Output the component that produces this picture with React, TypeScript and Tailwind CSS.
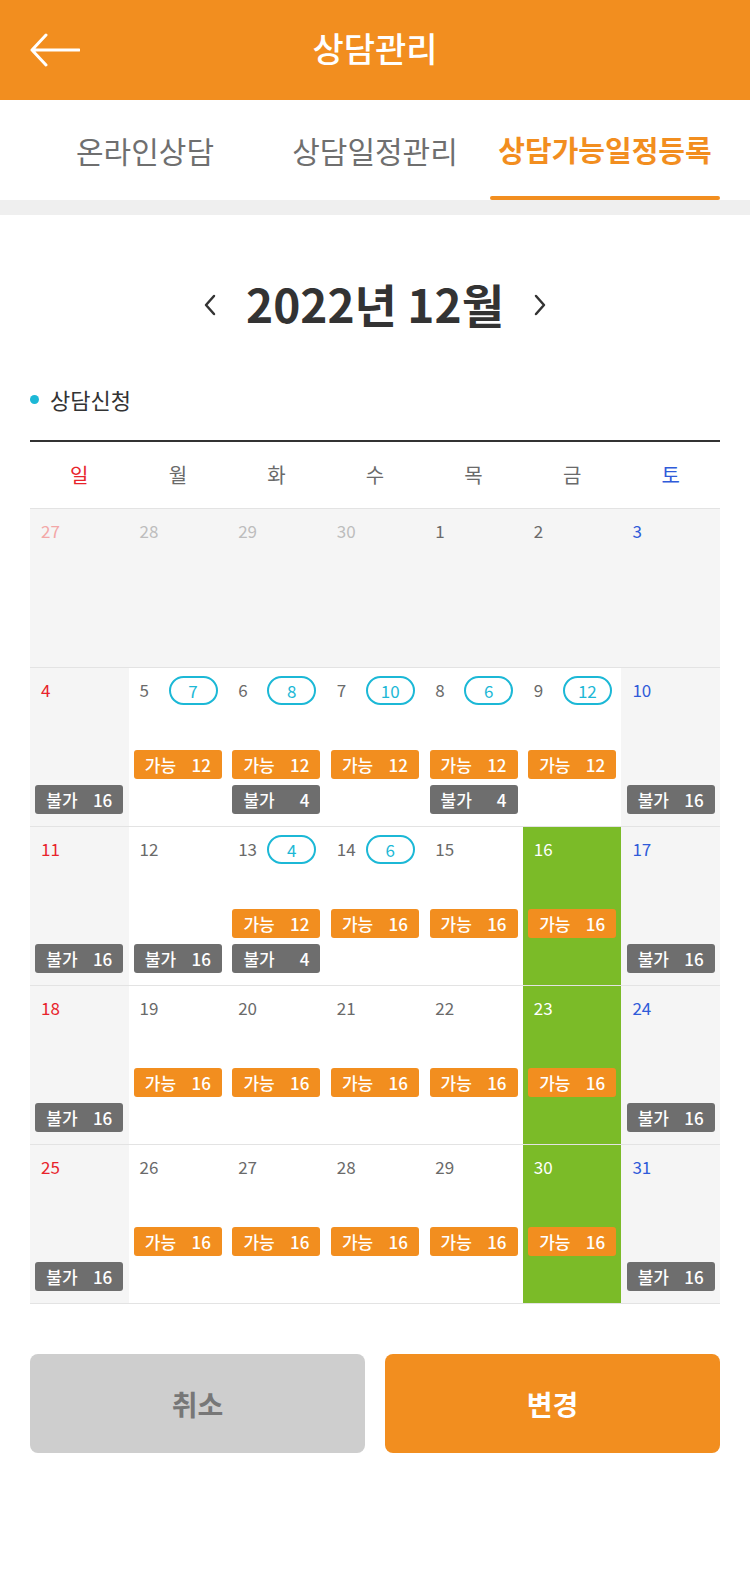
import React from 'react';

type Day = {
  d: number;
  kind: 'sun' | 'sat' | 'week';
  prev?: boolean;
  shaded?: boolean;
  green?: boolean;
  pill?: number;
  ok?: number;
  no?: number;
};

const weeks: Day[][] = [
  [
    { d: 27, kind: 'sun', prev: true, shaded: true },
    { d: 28, kind: 'week', prev: true, shaded: true },
    { d: 29, kind: 'week', prev: true, shaded: true },
    { d: 30, kind: 'week', prev: true, shaded: true },
    { d: 1, kind: 'week', shaded: true },
    { d: 2, kind: 'week', shaded: true },
    { d: 3, kind: 'sat', shaded: true },
  ],
  [
    { d: 4, kind: 'sun', shaded: true, no: 16 },
    { d: 5, kind: 'week', pill: 7, ok: 12 },
    { d: 6, kind: 'week', pill: 8, ok: 12, no: 4 },
    { d: 7, kind: 'week', pill: 10, ok: 12 },
    { d: 8, kind: 'week', pill: 6, ok: 12, no: 4 },
    { d: 9, kind: 'week', pill: 12, ok: 12 },
    { d: 10, kind: 'sat', shaded: true, no: 16 },
  ],
  [
    { d: 11, kind: 'sun', shaded: true, no: 16 },
    { d: 12, kind: 'week', no: 16 },
    { d: 13, kind: 'week', pill: 4, ok: 12, no: 4 },
    { d: 14, kind: 'week', pill: 6, ok: 16 },
    { d: 15, kind: 'week', ok: 16 },
    { d: 16, kind: 'week', green: true, ok: 16 },
    { d: 17, kind: 'sat', shaded: true, no: 16 },
  ],
  [
    { d: 18, kind: 'sun', shaded: true, no: 16 },
    { d: 19, kind: 'week', ok: 16 },
    { d: 20, kind: 'week', ok: 16 },
    { d: 21, kind: 'week', ok: 16 },
    { d: 22, kind: 'week', ok: 16 },
    { d: 23, kind: 'week', green: true, ok: 16 },
    { d: 24, kind: 'sat', shaded: true, no: 16 },
  ],
  [
    { d: 25, kind: 'sun', shaded: true, no: 16 },
    { d: 26, kind: 'week', ok: 16 },
    { d: 27, kind: 'week', ok: 16 },
    { d: 28, kind: 'week', ok: 16 },
    { d: 29, kind: 'week', ok: 16 },
    { d: 30, kind: 'week', green: true, ok: 16 },
    { d: 31, kind: 'sat', shaded: true, no: 16 },
  ],
];

const dateColor = (day: Day) => {
  if (day.green) return 'text-white';
  if (day.prev) return day.kind === 'sun' ? 'text-[#f3a7a7]' : 'text-[#bdbdbd]';
  if (day.kind === 'sun') return 'text-[#e8232b]';
  if (day.kind === 'sat') return 'text-[#2f5bd9]';
  return 'text-[#6a6a6a]';
};

const Cell: React.FC<{ day: Day }> = ({ day }) => {
  const bg = day.green ? 'bg-[#7bbb28]' : day.shaded ? 'bg-[#f5f5f5]' : 'bg-white';
  return (
    <div className={`flex flex-col pt-[8px] pb-[12px] ${bg}`}>
      <div className="flex items-center h-[29px] pl-[11px]">
        <span className={`w-[29px] text-[17px] leading-none pb-[2px] ${dateColor(day)}`}>{day.d}</span>
        {day.pill !== undefined && (
          <span className="w-[49px] h-[29px] rounded-full border-2 border-[#1cb8d6] text-[#1cb8d6] text-[17px] leading-none flex items-center justify-center">
            {day.pill}
          </span>
        )}
      </div>
      <div className="mt-auto flex flex-col gap-[6px]">
        <div className="h-[29px]">
          {day.ok !== undefined && (
            <div className="mx-auto w-[88px] h-[29px] rounded-[3px] bg-[#f28e1f] text-white text-[17px] font-medium flex items-center justify-between px-[11px]">
              <span>가능</span>
              <span>{day.ok}</span>
            </div>
          )}
        </div>
        <div className="h-[29px]">
          {day.no !== undefined && (
            <div className="mx-auto w-[88px] h-[29px] rounded-[3px] bg-[#6e6e6e] text-white text-[17px] font-medium flex items-center justify-between px-[11px]">
              <span>불가</span>
              <span>{day.no}</span>
            </div>
          )}
        </div>
      </div>
    </div>
  );
};

const App: React.FC = () => {
  const weekdays = [
    { t: '일', c: 'text-[#e8232b]' },
    { t: '월', c: 'text-[#6a6a6a]' },
    { t: '화', c: 'text-[#6a6a6a]' },
    { t: '수', c: 'text-[#6a6a6a]' },
    { t: '목', c: 'text-[#6a6a6a]' },
    { t: '금', c: 'text-[#6a6a6a]' },
    { t: '토', c: 'text-[#2f5bd9]' },
  ];

  return (
    <div className="w-[750px] min-h-[1569px] bg-white font-['Noto_Sans_CJK_KR','Noto_Sans',sans-serif]">
      {/* Header */}
      <header className="h-[100px] bg-[#f28e1f] grid grid-cols-3 items-center px-[30px]">
        <svg width="50" height="34" viewBox="0 0 50 34" fill="none" stroke="white" strokeWidth="3" strokeLinecap="round" strokeLinejoin="round">
          <path d="M49 17H2M16 2L2 17L16 32" />
        </svg>
        <h1 className="text-center text-white text-[34px] font-medium leading-none pb-[4px]">상담관리</h1>
        <div />
      </header>

      {/* Tabs */}
      <nav className="h-[100px] flex px-[30px]">
        {['온라인상담', '상담일정관리', '상담가능일정등록'].map((t, i) => (
          <div key={t} className="flex-1 flex flex-col">
            <div
              className={`flex-1 flex items-center justify-center pt-[4px] whitespace-nowrap ${
                i === 2 ? 'text-[#f28e1f] font-bold text-[29px]' : 'text-[#6f6f6f] text-[30px]'
              }`}
            >
              {t}
            </div>
            <div className={`h-[4px] rounded-full ${i === 2 ? 'bg-[#f28e1f]' : 'bg-transparent'}`} />
          </div>
        ))}
      </nav>
      <div className="h-[15px] bg-[#efefef]" />

      {/* Month */}
      <div className="mt-[60px] h-[60px] flex items-center justify-center gap-[30px] text-[#333]">
        <svg width="13" height="22" viewBox="0 0 13 22" fill="none" stroke="#333" strokeWidth="2.5" strokeLinecap="round" strokeLinejoin="round">
          <path d="M11 2L3 11L11 20" />
        </svg>
        <span className="text-[46px] font-bold leading-none pb-[4px]">2022년 12월</span>
        <svg width="13" height="22" viewBox="0 0 13 22" fill="none" stroke="#333" strokeWidth="2.5" strokeLinecap="round" strokeLinejoin="round">
          <path d="M2 2L10 11L2 20" />
        </svg>
      </div>

      {/* Legend */}
      <div className="mt-[52px] h-[24px] px-[30px] flex items-center gap-[11px]">
        <span className="w-[9px] h-[9px] rounded-full bg-[#1cb8d6]" />
        <span className="text-[22px] text-[#333] leading-none">상담신청</span>
      </div>

      {/* Calendar */}
      <div className="mt-[29px] mx-[30px]">
        <div className="h-[2px] bg-[#333]" />
        <div className="grid grid-cols-7 h-[66px] items-center">
          {weekdays.map((w) => (
            <div key={w.t} className={`text-center text-[20px] ${w.c}`}>{w.t}</div>
          ))}
        </div>
        {weeks.map((week, wi) => (
          <div key={wi} className="grid grid-cols-7 h-[159px] border-t border-[#e3e3e3]">
            {week.map((day) => (
              <Cell key={`${wi}-${day.d}`} day={day} />
            ))}
          </div>
        ))}
        <div className="h-px bg-[#e3e3e3]" />
      </div>

      {/* Buttons */}
      <div className="mt-[50px] px-[30px] flex gap-[20px]">
        <button className="flex-1 h-[99px] rounded-[8px] bg-[#cecece] text-[#777] text-[28px] font-bold">취소</button>
        <button className="flex-1 h-[99px] rounded-[8px] bg-[#f28e1f] text-white text-[28px] font-bold">변경</button>
      </div>
    </div>
  );
};

export default App;
